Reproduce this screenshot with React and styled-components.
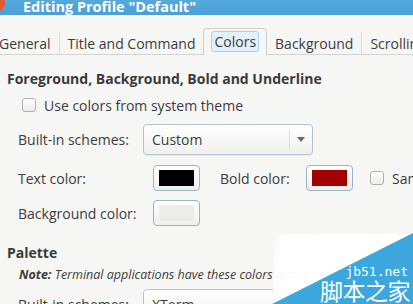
import React from 'react'
import styled, { createGlobalStyle } from 'styled-components'

const GlobalStyle = createGlobalStyle`
  html, body {
    margin: 0;
    padding: 0;
    background: #f6f6f5;
  }
  body {
    font-family: "Open Sans", "Liberation Sans", sans-serif;
    color: #3c3c3c;
  }
`

const Window = styled.div`
  width: 413px;
  height: 304px;
  overflow: hidden;
  position: relative;
  background: #f6f6f5;
`

const TitleBar = styled.div`
  height: 15px;
  display: flex;
  align-items: flex-end;
  overflow: hidden;
  background: linear-gradient(#55a9dc, #4a9fd6);
`

const CloseDot = styled.div`
  width: 18px;
  height: 18px;
  border-radius: 50%;
  background: #e9592f;
  margin-left: -13px;
  margin-bottom: 3px;
  flex: none;
`

const Title = styled.div`
  margin-left: 18px;
  margin-bottom: -1px;
  font-size: 14.5px;
  line-height: 18px;
  font-weight: 700;
  color: #ffffff;
  white-space: nowrap;
`

const TabBar = styled.div`
  height: 39px;
  display: flex;
  align-items: flex-end;
  border-bottom: 1px solid #d4d4d2;
  margin-left: -9px;
  white-space: nowrap;
`

const Tab = styled.div`
  display: flex;
  align-items: center;
  height: 22px;
  padding: 0 8px;
  font-size: 14px;
  border-left: ${p => (p.$divider ? '1px solid #dcdcda' : 'none')};
`

const ActiveTab = styled.div`
  display: flex;
  align-items: center;
  height: 25px;
  padding: 0 7px 1px;
  margin-bottom: -1px;
  background: #f6f6f5;
  border: 1px solid #d0d0ce;
  border-bottom: none;
  border-radius: 4px 4px 0 0;
  font-size: 14px;
`

const Focus = styled.span`
  display: inline-block;
  padding: 0 2px;
  line-height: 19px;
  background: #e3f1fb;
  border: 1px solid #a9d1ec;
  border-radius: 3px;
`

const Content = styled.div`
  padding: 15px 0 0 7px;
  display: flex;
  flex-direction: column;
`

const Heading = styled.div`
  font-size: 14px;
  font-weight: 700;
  color: #3a3a3a;
  line-height: 18px;
  margin-top: ${p => p.$top || 0}px;
`

const Group = styled.div`
  padding-left: ${p => p.$indent || 11}px;
  display: flex;
  flex-direction: column;
`

const Row = styled.div`
  display: flex;
  align-items: center;
  height: ${p => p.$h || 26}px;
  margin-top: ${p => p.$top || 0}px;
  font-size: 14px;
  white-space: nowrap;
`

const Check = styled.span`
  width: 14px;
  height: 14px;
  border: 1px solid #b0b0ae;
  border-radius: 3px;
  background: linear-gradient(#ffffff, #ececeb);
  box-sizing: border-box;
  flex: none;
  margin-left: ${p => p.$left || 0}px;
  margin-right: 8px;
`

const Label = styled.span`
  width: ${p => (p.$w ? p.$w + 'px' : 'auto')};
  flex: none;
`

const Combo = styled.div`
  width: 170px;
  height: 31px;
  box-sizing: border-box;
  display: flex;
  align-items: center;
  border: 1px solid #b6c4d0;
  border-radius: 4px;
  background: linear-gradient(#ffffff, #f0f0ef);
  box-shadow: 0 1px 0 rgba(0, 0, 0, 0.05);
`

const ComboText = styled.span`
  flex: 1;
  padding-left: 8px;
`

const ComboArrow = styled.span`
  width: 22px;
  height: 19px;
  border-left: 1px solid #dcdcda;
  display: flex;
  align-items: center;
  justify-content: center;
  &::after {
    content: '';
    border-left: 4px solid transparent;
    border-right: 4px solid transparent;
    border-top: 5px solid #6a6a6a;
  }
`

const ColorButton = styled.div`
  width: 47px;
  height: 26px;
  box-sizing: border-box;
  padding: 4px 5px;
  border: 1px solid #9cb3c6;
  border-radius: 4px;
  background: linear-gradient(#ffffff, #efefee);
  flex: none;
  margin-right: ${p => p.$right || 0}px;
`

const Swatch = styled.div`
  width: 100%;
  height: 100%;
  background: ${p => p.$color};
`

const Note = styled.div`
  font-size: 12.5px;
  font-style: italic;
  line-height: 16px;
  margin: 5px 0 0 12px;
  white-space: nowrap;
  b {
    font-weight: 700;
  }
`

const Watermark = styled.div`
  position: absolute;
  right: 0;
  bottom: 0;
  width: 140px;
  height: 70px;
  background: linear-gradient(100deg, rgba(255,255,255,0) 0%, rgba(255,255,255,0.96) 7%, #ffffff 30%);
`

const WaterSvg = styled.svg`
  position: absolute;
  right: 0;
  bottom: 0;
  display: block;
`

const WaterText = styled.div`
  position: absolute;
  right: 3px;
  bottom: 0;
  color: #ffffff;
  text-align: right;
  line-height: 1;
  font-family: "Noto Sans CJK SC", sans-serif;
`

const Site = styled.div`
  font-family: "DejaVu Sans Mono", monospace;
  font-size: 13px;
  margin-bottom: 1px;
  padding-right: 2px;
`

const Brand = styled.div`
  font-size: 23px;
  letter-spacing: -0.5px;
  margin-bottom: 2px;
`

export default function App() {
  return (
    <Window>
      <GlobalStyle />
      <TitleBar>
        <CloseDot />
        <Title>Editing Profile "Default"</Title>
      </TitleBar>
      <TabBar>
        <Tab>General</Tab>
        <Tab $divider>Title and Command</Tab>
        <ActiveTab><Focus>Colors</Focus></ActiveTab>
        <Tab>Background</Tab>
        <Tab $divider>Scrolling</Tab>
      </TabBar>
      <Content>
        <Heading>Foreground, Background, Bold and Underline</Heading>
        <Group>
          <Row $top={4}>
            <Check $left={4} />
            <span>Use colors from system theme</span>
          </Row>
          <Row $h={31} $top={6}>
            <Label $w={125}>Built-in schemes:</Label>
            <Combo>
              <ComboText>Custom</ComboText>
              <ComboArrow />
            </Combo>
          </Row>
          <Row $top={10}>
            <Label $w={135}>Text color:</Label>
            <ColorButton $right={20}><Swatch $color="#000000" /></ColorButton>
            <Label $w={86}>Bold color:</Label>
            <ColorButton $right={17}><Swatch $color="#a30000" /></ColorButton>
            <Check />
            <span>Same as text color</span>
          </Row>
          <Row $top={9}>
            <Label $w={135}>Background color:</Label>
            <ColorButton><Swatch $color="#ececeb" /></ColorButton>
          </Row>
        </Group>
        <Heading $top={18}>Palette</Heading>
        <Note><b>Note:</b> Terminal applications have these colors available to them.</Note>
        <Group>
          <Row $h={31} $top={6}>
            <Label $w={125}>Built-in schemes:</Label>
            <Combo>
              <ComboText>XTerm</ComboText>
              <ComboArrow />
            </Combo>
          </Row>
        </Group>
      </Content>
      <Watermark />
      <WaterSvg width="141" height="71" viewBox="0 0 141 71">
        <polygon points="0,71 141,0 141,71" fill="#3ca7dd" />
      </WaterSvg>
      <WaterText>
        <Site>jb51.net</Site>
        <Brand>脚本之家</Brand>
      </WaterText>
    </Window>
  )
}
